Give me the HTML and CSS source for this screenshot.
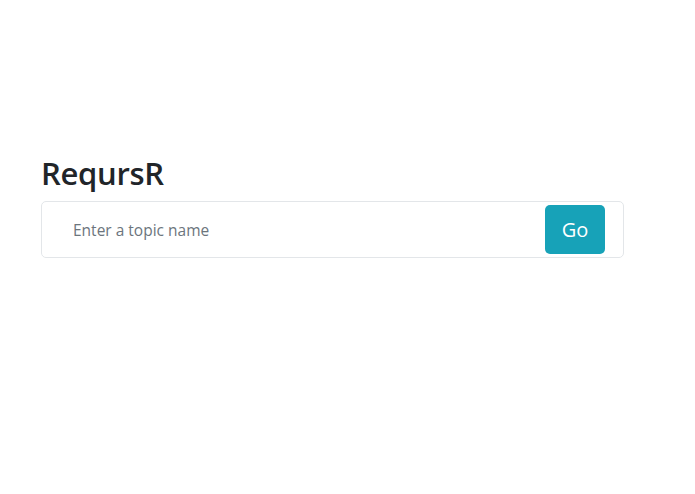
FILE: index.html
```html
<!DOCTYPE html>
<html lang="en">
<head>
    <meta charset="UTF-8">
    <meta name="viewport" content="width=device-width, initial-scale=1.0">
    <title>ReqursR</title>
    <link rel="stylesheet" href="styles.css">
</head>
<body>

    <main class="page">
        <h2 class="title">ReqursR</h2>

        <form class="search" onsubmit="return false;">
            <input class="search-input" type="text" placeholder="Enter a topic name">
            <button class="search-btn" type="submit">Go</button>
        </form>
    </main>

</body>
</html>
```

FILE: styles.css
```css
/* Reset styles */
* {
    margin: 0;
    padding: 0;
    box-sizing: border-box;
}

body {
    font-family: 'Open Sans', 'Noto Sans', sans-serif;
    background-color: #ffffff;
    color: #212529;
}

.page {
    padding: 155px 0 0 41px;
    width: 624px;
}

/* Title */
.title {
    font-size: 31px;
    font-weight: 600;
    line-height: 1.2;
    margin-bottom: 9px;
    letter-spacing: -0.3px;
}

/* Search card */
.search {
    display: flex;
    align-items: center;
    height: 57px;
    border: 1px solid #e3e6e9;
    border-radius: 5px;
    padding: 0 18px 0 0;
}

.search-input {
    flex: 1;
    height: 100%;
    border: none;
    outline: none;
    background: transparent;
    padding-left: 31px;
    font-family: inherit;
    font-size: 15.5px;
    color: #495057;
}

.search-input::placeholder {
    color: #6c757d;
}

.search-btn {
    width: 60px;
    height: 49px;
    background-color: #17a2b8;
    color: #ffffff;
    border: none;
    border-radius: 5px;
    font-family: inherit;
    font-size: 20px;
    cursor: pointer;
}
```
